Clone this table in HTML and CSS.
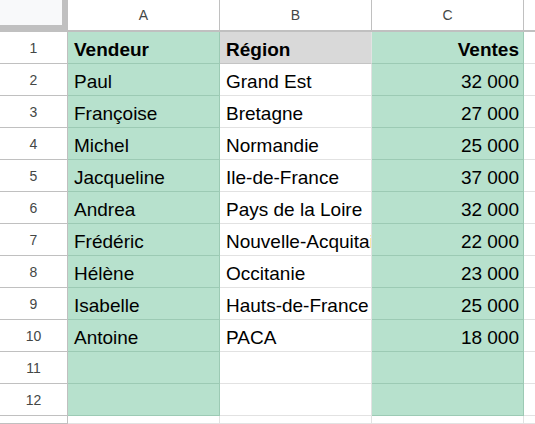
FILE: index.html
```html
<!DOCTYPE html>
<html lang="fr">
<head>
<meta charset="utf-8">
<link rel="stylesheet" href="styles.css">
</head>
<body>
<div class="sheet">
  <div class="corner"></div>
  <div class="colh">A</div>
  <div class="colh">B</div>
  <div class="colh">C</div>
  <div class="colh edge"></div>

  <div class="rowh">1</div>
  <div class="cell g b">Vendeur</div>
  <div class="cell gray b">Région</div>
  <div class="cell g b r">Ventes</div>
  <div class="cell edge"></div>

  <div class="rowh">2</div>
  <div class="cell g">Paul</div>
  <div class="cell">Grand Est</div>
  <div class="cell g r">32 000</div>
  <div class="cell edge"></div>

  <div class="rowh">3</div>
  <div class="cell g">Françoise</div>
  <div class="cell">Bretagne</div>
  <div class="cell g r">27 000</div>
  <div class="cell edge"></div>

  <div class="rowh">4</div>
  <div class="cell g">Michel</div>
  <div class="cell">Normandie</div>
  <div class="cell g r">25 000</div>
  <div class="cell edge"></div>

  <div class="rowh">5</div>
  <div class="cell g">Jacqueline</div>
  <div class="cell">Ile-de-France</div>
  <div class="cell g r">37 000</div>
  <div class="cell edge"></div>

  <div class="rowh">6</div>
  <div class="cell g">Andrea</div>
  <div class="cell">Pays de la Loire</div>
  <div class="cell g r">32 000</div>
  <div class="cell edge"></div>

  <div class="rowh">7</div>
  <div class="cell g">Frédéric</div>
  <div class="cell">Nouvelle-Acquitaine</div>
  <div class="cell g r">22 000</div>
  <div class="cell edge"></div>

  <div class="rowh">8</div>
  <div class="cell g">Hélène</div>
  <div class="cell">Occitanie</div>
  <div class="cell g r">23 000</div>
  <div class="cell edge"></div>

  <div class="rowh">9</div>
  <div class="cell g">Isabelle</div>
  <div class="cell">Hauts-de-France</div>
  <div class="cell g r">25 000</div>
  <div class="cell edge"></div>

  <div class="rowh">10</div>
  <div class="cell g">Antoine</div>
  <div class="cell">PACA</div>
  <div class="cell g r">18 000</div>
  <div class="cell edge"></div>

  <div class="rowh">11</div>
  <div class="cell g"></div>
  <div class="cell"></div>
  <div class="cell g"></div>
  <div class="cell edge"></div>

  <div class="rowh">12</div>
  <div class="cell g"></div>
  <div class="cell"></div>
  <div class="cell g"></div>
  <div class="cell edge"></div>

  <div class="rowh"></div>
  <div class="cell"></div>
  <div class="cell"></div>
  <div class="cell"></div>
  <div class="cell edge"></div>
</div>
</body>
</html>
```

FILE: styles.css
```css
html, body {
  margin: 0;
  padding: 0;
  background: #ffffff;
  overflow: hidden;
}

.sheet {
  display: grid;
  grid-template-columns: 68px 152px 152px 152px 11px;
  grid-template-rows: 32px repeat(12, 32px) 8px;
  font-family: Arial, "Liberation Sans", sans-serif;
}

.sheet > div {
  box-sizing: border-box;
  overflow: hidden;
  white-space: nowrap;
}

.corner {
  background: #f8f9fa;
  border-right: 6px solid #c0c0c0;
  border-bottom: 7px solid #c0c0c0;
}

.colh {
  display: flex;
  align-items: center;
  justify-content: center;
  font-size: 14px;
  color: #444746;
  border-right: 1px solid #c0c0c0;
  border-bottom: 2px solid #c0c0c0;
  background: #ffffff;
}

.colh.edge {
  border-right: none;
}

.rowh {
  display: flex;
  align-items: center;
  justify-content: center;
  font-size: 14px;
  color: #444746;
  border-right: 1px solid #c0c0c0;
  border-bottom: 1px solid #c0c0c0;
  background: #ffffff;
}

.cell {
  display: flex;
  align-items: flex-end;
  padding: 0 4px 2px 6px;
  font-size: 19px;
  line-height: 22px;
  color: #000000;
  border-right: 1px solid #e2e2e2;
  border-bottom: 1px solid #e2e2e2;
  background: #ffffff;
}

.cell.g {
  background: #b7e1cd;
  border-right-color: #9ccab4;
  border-bottom-color: #9ccab4;
}

.cell.gray {
  background: #d9d9d9;
  border-bottom-color: #c4c4c4;
}

.cell.b {
  font-weight: bold;
}

.cell.r {
  justify-content: flex-end;
}

.cell.edge {
  border-right: none;
}
```
